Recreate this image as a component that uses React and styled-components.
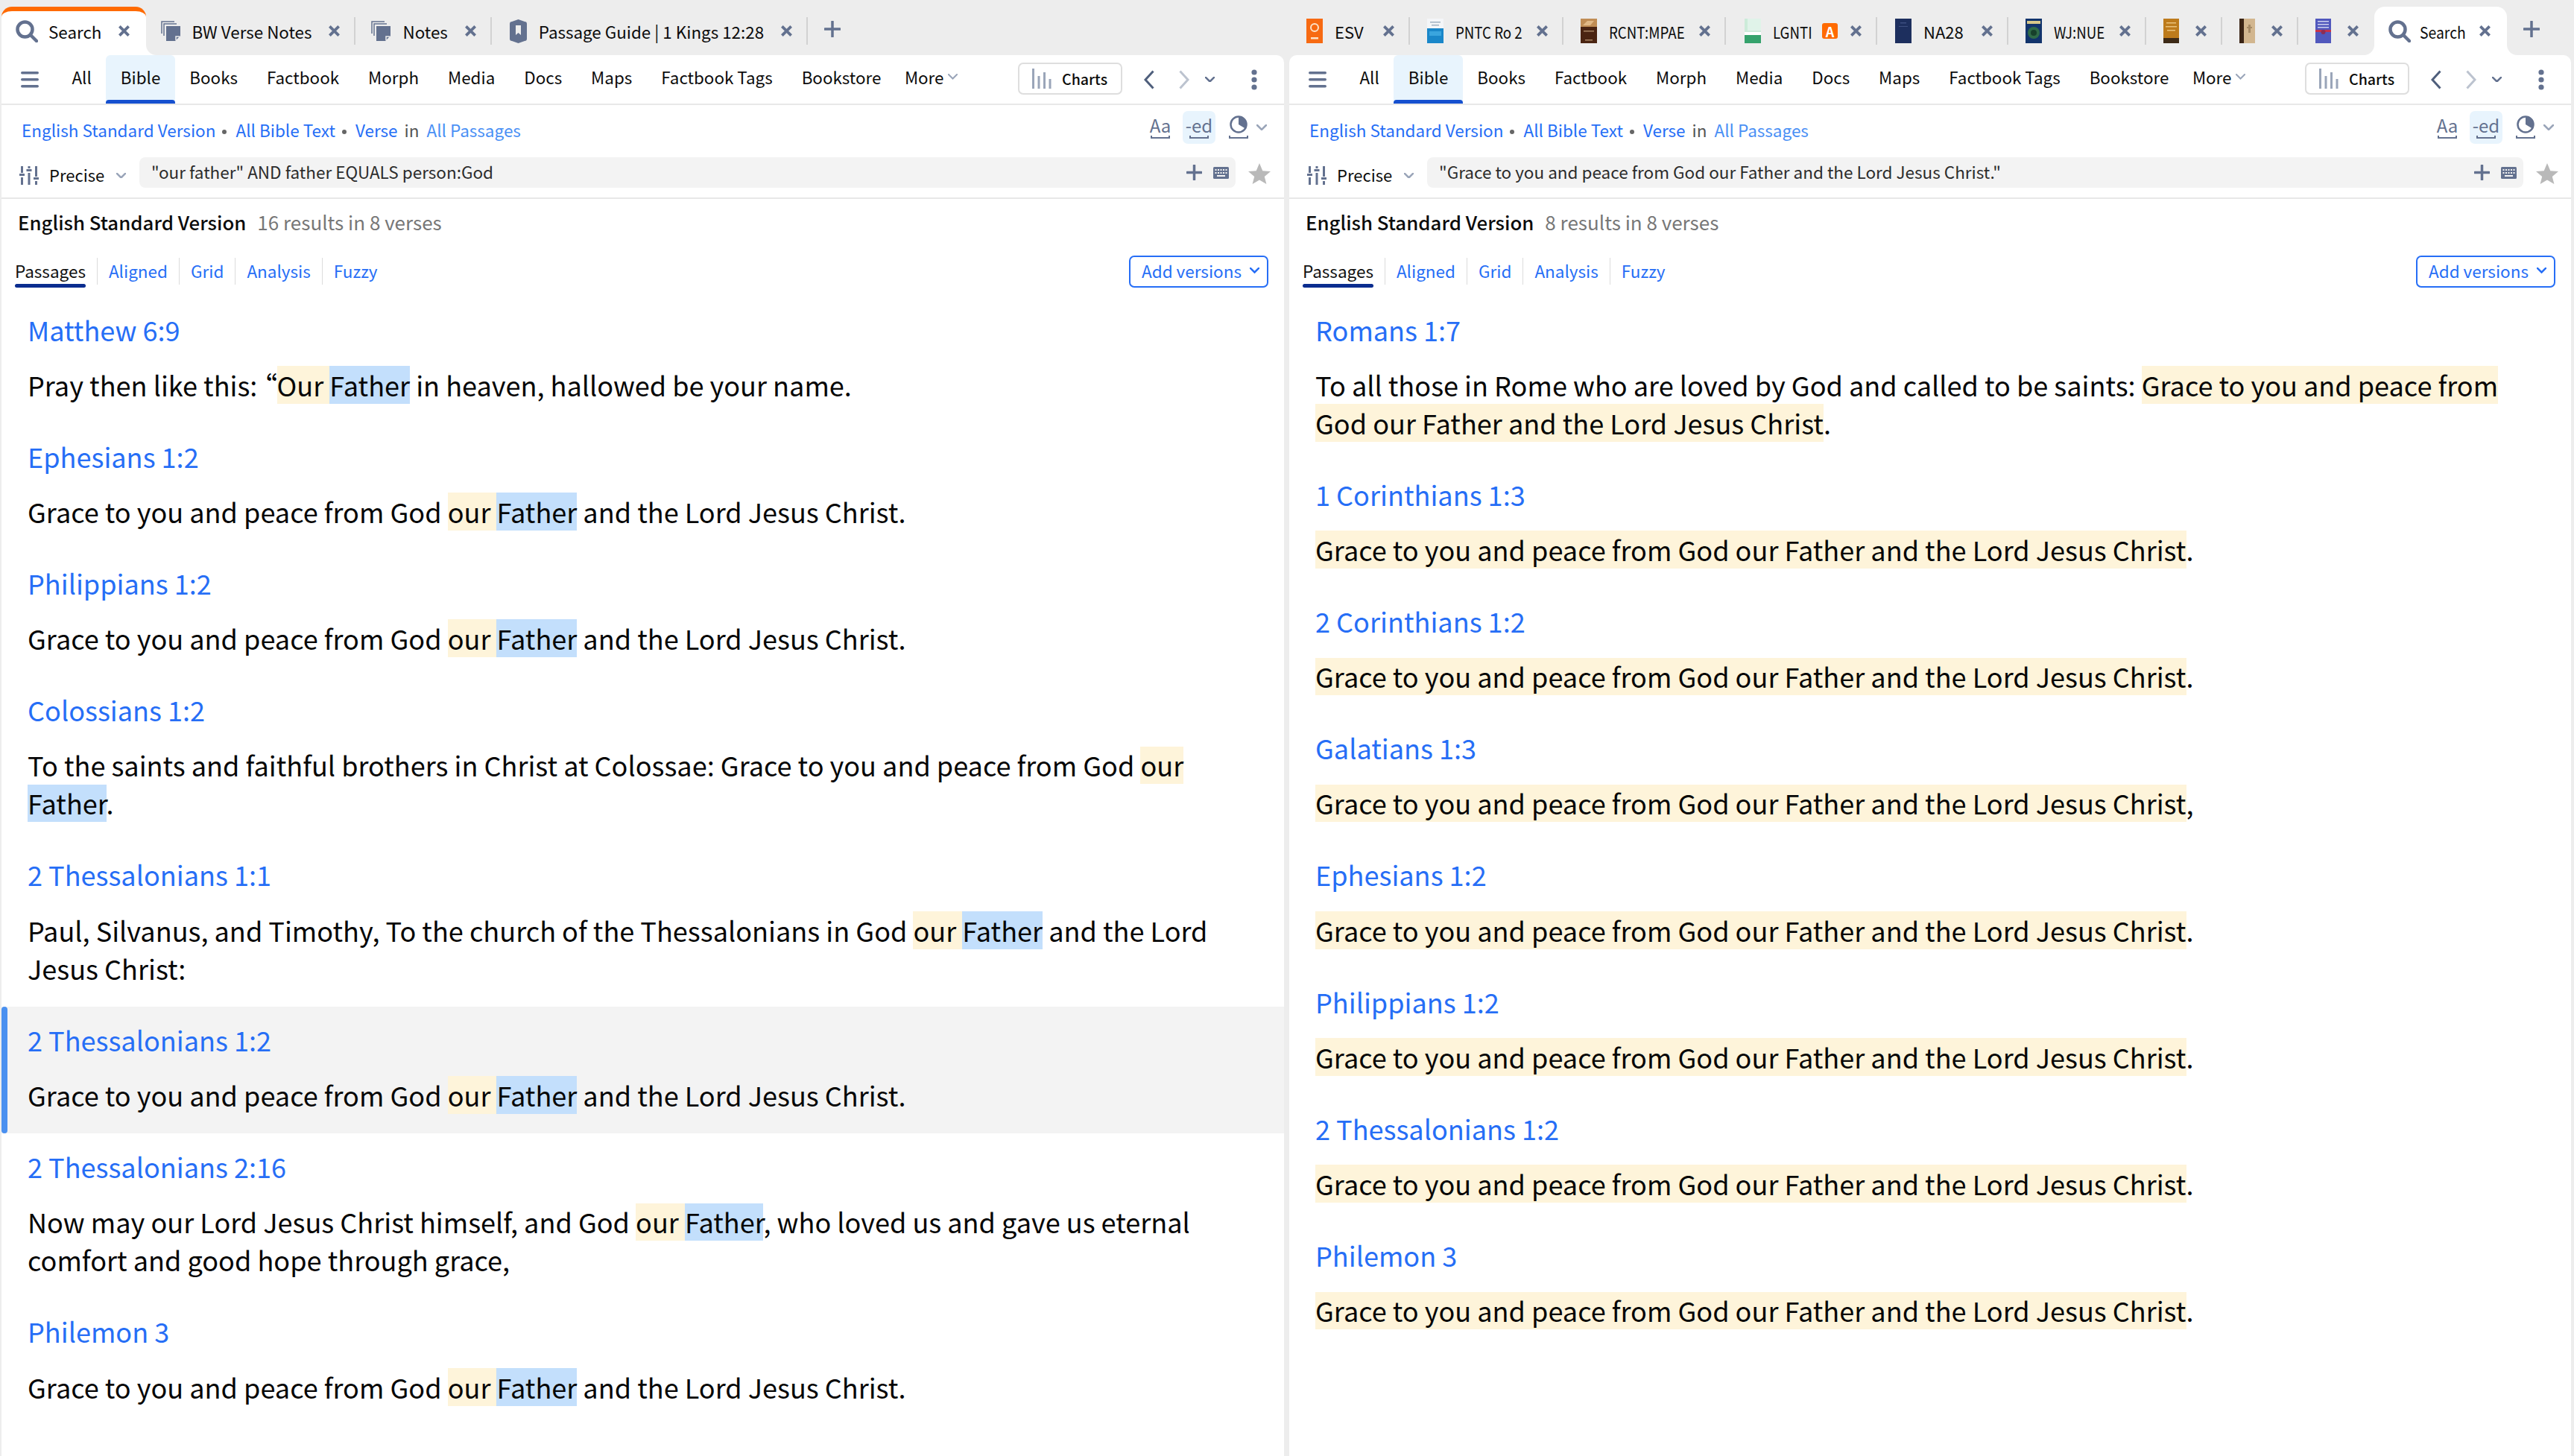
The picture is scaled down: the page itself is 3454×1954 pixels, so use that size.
import React from "react";
import styled, { createGlobalStyle } from "styled-components";

const GlobalStyle = createGlobalStyle`
  html, body {
    margin: 0;
    padding: 0;
    background: #ededed;
  }
  body {
    font-family: "Noto Sans CJK SC", "Noto Sans", sans-serif;
    font-feature-settings: "palt";
    color: #0c0c0c;
    -webkit-font-smoothing: antialiased;
  }
`;

const ICON = "#63718f";
const BLUE = "#266ef6";

const Page = styled.div`
  display: grid;
  grid-template-columns: 1721px 1720px;
  column-gap: 7px;
  padding: 0 4px 0 2px;
  width: 3454px;
  height: 1954px;
  box-sizing: border-box;
  overflow: hidden;
`;

const Pane = styled.div`
  display: flex;
  flex-direction: column;
  min-width: 0;
`;

const TabStrip = styled.div`
  display: flex;
  height: 74px;
  box-sizing: border-box;
  padding-top: 9px;
  padding-left: ${(p) => p.$inset || 0}px;
`;

const Tab = styled.div`
  display: flex;
  align-items: center;
  height: 37px;
  margin-top: 14px;
  padding: 0 18px 0 ${(p) => p.$left || 23}px;
  border-right: 2px solid ${(p) => (p.$noRule ? "transparent" : "#d2d2d2")};
  box-sizing: border-box;
  flex: none;
`;

const ActiveTab = styled.div`
  position: relative;
  display: flex;
  align-items: center;
  height: 65px;
  padding: 0 21px ${(p) => (p.$accent ? 6 : 0)}px 19px;
  background: #fff;
  border-radius: 14px 14px 0 0;
  flex: none;
  border-top: ${(p) => (p.$accent ? "6px solid #ff6a00" : "none")};
  box-sizing: border-box;

  &::after {
    content: "";
    position: absolute;
    right: -14px;
    bottom: 0;
    width: 14px;
    height: 14px;
    background: radial-gradient(circle at 100% 0, #ededed 13.5px, #fff 14.5px);
  }

  &::before {
    content: ${(p) => (p.$flareLeft ? '""' : "none")};
    position: absolute;
    left: -14px;
    bottom: 0;
    width: 14px;
    height: 14px;
    background: radial-gradient(circle at 0 0, #ededed 13.5px, #fff 14.5px);
  }
`;

const TabLabel = styled.span`
  font-size: 22.4px;
  line-height: 30px;
  margin-left: ${(p) => p.$gap || 16}px;
  white-space: nowrap;
`;

const SqueezedLabel = styled(TabLabel)`
  display: inline-block;
  font-size: 22px;
  width: ${(p) => p.$width}px;
  transform: scaleX(${(p) => p.$scale});
  transform-origin: 0 50%;
`;

const CloseBtn = styled.svg`
  width: 17px;
  height: 17px;
  margin-left: ${(p) => p.$gap || 22}px;
  flex: none;
`;

const AddTab = styled.svg`
  width: 22px;
  height: 22px;
  margin: 19px 0 0 22px;
  flex: none;
`;

const Badge = styled.span`
  display: inline-flex;
  align-items: center;
  justify-content: center;
  width: 21px;
  height: 21px;
  margin-left: 16px;
  margin-right: -6px;
  border-radius: 3px;
  background: #ff6a00;
  color: #fff;
  font-size: 18px;
  font-weight: 700;
  line-height: 1;
`;

const Panel = styled.div`
  flex: 1;
  background: #fff;
  border-radius: ${(p) => (p.$first ? "0 10px 0 0" : "10px 10px 0 0")};
  display: flex;
  flex-direction: column;
  min-height: 0;
`;

const Toolbar = styled.div`
  display: flex;
  align-items: stretch;
  height: 67px;
  box-sizing: border-box;
  border-bottom: 2px solid #e8e8e8;
  padding-left: 26px;
`;

const Hamburger = styled.svg`
  width: 24px;
  height: 22px;
  margin: 22px 25px 0 0;
  flex: none;
`;

const NavItem = styled.div`
  position: relative;
  padding: 0 19.5px;
  height: 65px;
  line-height: 58px;
  font-size: 22.4px;
  white-space: nowrap;
  flex: none;
  background: ${(p) => (p.$active ? "#e8f4fd" : "transparent")};
  border-radius: 6px 6px 0 0;

  &::after {
    content: ${(p) => (p.$active ? '""' : "none")};
    position: absolute;
    left: 0;
    right: 0;
    bottom: 0;
    height: 5px;
    background: #1650cf;
    border-radius: 4px 4px 0 0;
  }
`;

const MoreItem = styled(NavItem)`
  display: flex;
  align-items: center;
  align-self: flex-start;
  gap: 6px;
  height: 58px;
  padding: 0;
  margin-left: 12px;
`;

const ToolbarEnd = styled.div`
  display: flex;
  align-items: center;
  margin-left: auto;
  padding-right: 36px;
`;

const ChartsBtn = styled.div`
  display: flex;
  align-items: center;
  gap: 14px;
  width: 140px;
  height: 43px;
  margin-top: -2px;
  padding-left: 17px;
  box-sizing: border-box;
  border: 2px solid #dedede;
  border-radius: 7px;
  font-size: 19.6px;
  font-weight: 500;
`;

const ScopeRow = styled.div`
  display: flex;
  align-items: flex-start;
  height: 70px;
  box-sizing: border-box;
  padding: 8px 23px 0 27px;
`;

const ScopeText = styled.div`
  display: flex;
  align-items: center;
  height: 44px;
  margin-top: 3px;
  font-size: 22.5px;
  white-space: nowrap;
`;

const ScopeLink = styled.span`
  color: ${(p) => (p.$light ? "#4a90f5" : BLUE)};
`;

const Dot = styled.span`
  width: 6px;
  height: 6px;
  margin: 6px 12px 0 9px;
  border-radius: 50%;
  background: #666;
`;

const InWord = styled.span`
  margin: 0 10px 0 9px;
  color: #555;
`;

const DisplayTools = styled.div`
  display: flex;
  align-items: center;
  margin-left: auto;
`;

const GlyphToggle = styled.div`
  position: relative;
  display: flex;
  justify-content: center;
  width: 44px;
  height: 44px;
  margin-right: ${(p) => p.$gap || 0}px;
  border-radius: 7px;
  background: ${(p) => (p.$on ? "#e8f4fd" : "transparent")};
  color: ${ICON};
  font-size: 24px;
  line-height: 38px;

  &::after {
    content: "";
    position: absolute;
    left: 9px;
    right: 9px;
    bottom: 7px;
    height: 4px;
    border: 2px solid ${ICON};
    border-top: none;
    box-sizing: border-box;
  }
`;

const QueryRow = styled.div`
  display: flex;
  align-items: flex-start;
  height: 56px;
  box-sizing: border-box;
  border-bottom: 2px solid #e8e8e8;
  padding-left: 24px;
`;

const MatchMode = styled.div`
  display: flex;
  align-items: center;
  width: 161px;
  height: 41px;
  margin-top: 4px;
  font-size: 22px;
  flex: none;
`;

const ModeLabel = styled.span`
  margin: 0 16px 0 14px;
  padding-bottom: 4px;
`;

const QueryBox = styled.div`
  display: flex;
  align-items: center;
  width: ${(p) => p.$width}px;
  height: 41px;
  padding: 0 9px 0 16px;
  box-sizing: border-box;
  border-radius: 8px;
  background: #f3f3f3;
  font-size: 22.5px;
  color: #2c2c2c;
  flex: none;
`;

const QueryText = styled.span`
  flex: 1;
  padding-bottom: 4px;
  white-space: nowrap;
`;

const StarIcon = styled.svg`
  width: 30px;
  height: 28px;
  margin: 8px 0 0 17px;
  flex: none;
`;

const HeaderRow = styled.div`
  display: flex;
  align-items: center;
  height: 62px;
  box-sizing: border-box;
  padding: 0 0 2px 22px;
  white-space: nowrap;
`;

const VersionName = styled.span`
  font-size: 25.8px;
  font-weight: 500;
  margin-right: 15px;
`;

const ResultCount = styled.span`
  font-size: 26px;
  color: #777;
`;

const ViewRow = styled.div`
  display: flex;
  align-items: flex-start;
  height: 68.5px;
  box-sizing: border-box;
  padding: 14px 21px 0 18px;
`;

const ViewTabs = styled.div`
  display: flex;
  margin-top: 3px;
`;

const ViewTab = styled.div`
  position: relative;
  height: 36px;
  line-height: 34px;
  padding: 0 15px;
  font-size: 22.5px;
  color: ${(p) => (p.$active ? "#111" : BLUE)};
  border-right: ${(p) => (p.$last ? "none" : "1px solid #dcdcdc")};
  box-sizing: content-box;

  &:first-child {
    padding-left: 0;
  }
`;

const ViewUnderline = styled.span`
  position: absolute;
  left: 0;
  right: 15px;
  bottom: -4px;
  height: 5px;
  border-radius: 3px;
  background: #0b2d8f;
`;

const AddVersions = styled.div`
  display: flex;
  align-items: center;
  gap: 11px;
  height: 43px;
  width: 187px;
  margin-left: auto;
  padding: 0 0 3px 15px;
  box-sizing: border-box;
  border: 2px solid ${BLUE};
  border-radius: 7px;
  color: ${BLUE};
  font-size: 22.5px;
  white-space: nowrap;
`;

const ResultList = styled.div`
  flex: 1;
  min-height: 0;
  overflow: hidden;
`;

const Result = styled.div`
  position: relative;
  padding: 24px 35px 25.8px;
  background: ${(p) => (p.$selected ? "#f3f3f3" : "transparent")};

  &::before {
    content: ${(p) => (p.$selected ? '""' : "none")};
    position: absolute;
    left: 0;
    top: 0;
    bottom: 0;
    width: 8px;
    border-radius: 4px;
    background: #4a90f0;
  }
`;

const Reference = styled.div`
  height: 46px;
  margin-bottom: 23.2px;
  font-size: 36.1px;
  line-height: 41px;
  color: ${BLUE};
`;

const Verse = styled.div`
  font-size: 36.1px;
  line-height: 51.2px;
  color: #060606;
`;

const Hit = styled.span`
  background: linear-gradient(${(p) => p.$color}, ${(p) => p.$color}) 0 calc(50% + 0.8px) / 100% 51px no-repeat;
  -webkit-box-decoration-break: clone;
  box-decoration-break: clone;
`;

const Term = ({ children }) => <Hit $color="#fef4da">{children}</Hit>;
const Lemma = ({ children }) => <Hit $color="#c3dffc">{children}</Hit>;

// --- drawn icons ---

const SearchIcon = () => (
  <svg width="30" height="30" viewBox="0 0 30 30" style={{ flex: "none" }}>
    <circle cx="12.5" cy="12.5" r="10" fill="none" stroke={ICON} strokeWidth="4.5" />
    <path d="M20 20l8 8" stroke={ICON} strokeWidth="4.5" strokeLinecap="round" />
  </svg>
);

const CloseIcon = ({ gap }) => (
  <CloseBtn viewBox="0 0 18 18" $gap={gap}>
    <path d="M2.5 2.5l13 13M15.5 2.5l-13 13" stroke={ICON} strokeWidth="4" />
  </CloseBtn>
);

const NotesIcon = () => (
  <svg width="26" height="27" viewBox="0 0 26 27" style={{ flex: "none" }}>
    <path d="M1 17V1h17M4 20V4h17" fill="none" stroke={ICON} strokeWidth="1.5" />
    <path d="M7 7h19v13l-7 7H7z" fill={ICON} />
    <path d="M20 26v-5h5" fill="none" stroke="#ededed" strokeWidth="1.5" />
  </svg>
);

const GuideIcon = () => (
  <svg width="23" height="34" viewBox="0 0 23 34" style={{ flex: "none" }}>
    <path d="M3 4l8.5-3L20 4q3 0 3 3v20q0 3-3 3l-8.5 3L3 30q-3 0-3-3V7q0-3 3-3z" fill={ICON} />
    <path d="M8 9h7v13l-3.5-3L8 22z" fill="#ededed" />
  </svg>
);

const Book = ({ art }) => (
  <svg width="22" height="33" viewBox="0 0 22 33" style={{ flex: "none" }}>
    {art}
  </svg>
);

const esvArt = (
  <>
    <rect width="22" height="33" fill="#f76a12" />
    <circle cx="11" cy="12" r="5" fill="none" stroke="#fde2c8" strokeWidth="2" />
    <rect x="6" y="25" width="10" height="2.5" fill="#fde2c8" />
  </>
);
const pntcArt = (
  <>
    <rect width="22" height="13" fill="#f4f6f8" />
    <rect x="4" y="4" width="14" height="1.5" fill="#9fb0c0" />
    <rect x="6" y="8" width="10" height="1.5" fill="#9fb0c0" />
    <rect y="13" width="22" height="20" fill="#1a87c9" />
    <rect x="3" y="17" width="16" height="6" fill="#3aa5de" />
  </>
);
const rcntArt = (
  <>
    <rect width="22" height="33" fill="#4a2412" />
    <rect width="22" height="11" fill="#c08d55" />
    <path d="M3 9l6-6h9l-5 6z" fill="#e0b886" />
    <rect x="4" y="16" width="14" height="1.5" fill="#a88565" />
    <rect x="6" y="28" width="10" height="1.5" fill="#a88565" />
  </>
);
const lgntiArt = (
  <>
    <rect width="22" height="33" fill="#ccebd9" />
    <path d="M4 0h18v16H4z" fill="#e0f3e9" />
    <rect y="22" width="22" height="11" fill="#35a26c" />
    <rect y="18" width="22" height="4" fill="#fff" />
  </>
);
const na28Art = (
  <>
    <rect width="22" height="33" fill="#1d2f5e" />
    <rect x="7" y="5" width="8" height="1.5" fill="#3d4f80" />
    <rect x="5" y="10" width="12" height="1" fill="#3d4f80" />
  </>
);
const josephusArt = (
  <>
    <rect width="22" height="33" fill="#12346c" />
    <rect x="2" y="3" width="18" height="4" fill="#d8c88a" />
    <circle cx="11" cy="19" r="8" fill="#2f6b48" />
    <circle cx="11" cy="19" r="4" fill="#17402b" />
  </>
);
const amberArt = (
  <>
    <rect width="21" height="33" fill="#bd7b1c" />
    <rect y="26" width="21" height="7" fill="#3d2a17" />
    <rect x="4" y="5" width="13" height="1.5" fill="#eac27a" />
    <rect x="3" y="10" width="15" height="1.5" fill="#eac27a" />
    <rect x="5" y="15" width="11" height="1.5" fill="#eac27a" />
  </>
);
const tanArt = (
  <>
    <rect width="21" height="33" fill="#d2b68f" />
    <rect width="6" height="33" fill="#3a2415" />
    <rect x="12" y="8" width="3" height="11" fill="#a58a66" />
    <rect x="10" y="11" width="7" height="2" fill="#a58a66" />
  </>
);
const violetArt = (
  <>
    <rect width="21" height="33" fill="#5158bd" />
    <rect y="15" width="21" height="3" fill="#c6324a" />
    <rect x="3" y="3" width="15" height="1.5" fill="#cfd2ef" />
    <rect x="3" y="7" width="15" height="1.5" fill="#cfd2ef" />
    <rect x="3" y="11" width="15" height="1.5" fill="#cfd2ef" />
    <circle cx="10.5" cy="18" r="3" fill="#8b2d55" />
  </>
);

const PlusIcon = ({ color = ICON }) => (
  <AddTab viewBox="0 0 22 22">
    <path d="M11 1v20M1 11h20" stroke={color} strokeWidth="3.5" strokeLinecap="round" />
  </AddTab>
);

const Chevron = ({ size = 14, color = ICON, width = 2.5 }) => (
  <svg width={size} height={size * 0.6} viewBox="0 0 14 8.4" style={{ flex: "none" }}>
    <path d="M1 1l6 6 6-6" fill="none" stroke={color} strokeWidth={width * (14 / size)} strokeLinecap="round" />
  </svg>
);

const FilterIcon = () => (
  <svg width="26" height="25" viewBox="0 0 26 25" style={{ flex: "none" }}>
    <g fill={ICON}>
      <rect x="2" y="0" width="3" height="9" />
      <rect x="0" y="10" width="7" height="3" />
      <rect x="2" y="15" width="3" height="10" />
      <rect x="11.5" y="0" width="3" height="3" />
      <rect x="9.5" y="4" width="7" height="3" />
      <rect x="11.5" y="9" width="3" height="16" />
      <rect x="21" y="0" width="3" height="14" />
      <rect x="19" y="15" width="7" height="3" />
      <rect x="21" y="20" width="3" height="5" />
    </g>
  </svg>
);

const BarsIcon = () => (
  <svg width="26" height="27" viewBox="0 0 26 27" style={{ flex: "none" }}>
    <g fill="#9aa5b9">
      <rect x="0" y="0" width="3" height="27" />
      <rect x="7.5" y="10" width="3" height="17" />
      <rect x="15" y="5" width="3" height="22" />
      <rect x="22.5" y="14" width="3" height="13" />
    </g>
  </svg>
);

const Arrow = styled.svg`
  width: 14px;
  height: 26px;
  margin-left: ${(p) => p.$gap}px;
  flex: none;
`;

const DotsIcon = styled.svg`
  width: 8px;
  height: 28px;
  margin-left: 49px;
  flex: none;
`;

const ChevronSlot = styled.span`
  display: flex;
  margin-left: ${(p) => p.$gap}px;
`;

const ContrastGlyph = styled.svg`
  width: 24px;
  height: 24px;
  margin-top: 6px;
`;

const ContrastIcon = () => (
  <GlyphToggle>
    <ContrastGlyph viewBox="0 0 24 24">
      <circle cx="12" cy="12" r="10.5" fill="none" stroke={ICON} strokeWidth="2.5" />
      <path d="M12 1.5A10.5 10.5 0 0 1 21 17.5L12 12z" fill={ICON} />
    </ContrastGlyph>
  </GlyphToggle>
);

const KeyboardIcon = () => (
  <svg width="21" height="16" viewBox="0 0 21 16" style={{ flex: "none", marginLeft: 15 }}>
    <rect width="21" height="16" rx="1.5" fill={ICON} />
    <g fill="#f3f3f3">
      <rect x="2.5" y="3" width="2" height="2" />
      <rect x="6" y="3" width="2" height="2" />
      <rect x="9.5" y="3" width="2" height="2" />
      <rect x="13" y="3" width="2" height="2" />
      <rect x="16.5" y="3" width="2" height="2" />
      <rect x="2.5" y="7" width="2" height="2" />
      <rect x="6" y="7" width="2" height="2" />
      <rect x="9.5" y="7" width="2" height="2" />
      <rect x="13" y="7" width="2" height="2" />
      <rect x="16.5" y="7" width="2" height="2" />
      <rect x="5" y="11" width="11" height="2" />
    </g>
  </svg>
);

const InlinePlus = () => (
  <svg width="21" height="21" viewBox="0 0 21 21" style={{ flex: "none" }}>
    <path d="M10.5 1v19M1 10.5h19" stroke={ICON} strokeWidth="3.5" strokeLinecap="round" />
  </svg>
);

// --- data ---

const NAV = ["All", "Bible", "Books", "Factbook", "Morph", "Media", "Docs", "Maps", "Factbook Tags", "Bookstore"];
const VIEWS = ["Passages", "Aligned", "Grid", "Analysis", "Fuzzy"];

const GRACE = "Grace to you and peace from God our Father and the Lord Jesus Christ";

const leftResults = [
  { ref: "Matthew 6:9", verse: <>Pray then like this: “<Term>Our </Term><Lemma>Father</Lemma> in heaven, hallowed be your name.</> },
  { ref: "Ephesians 1:2", verse: <>Grace to you and peace from God <Term>our </Term><Lemma>Father</Lemma> and the Lord Jesus Christ.</> },
  { ref: "Philippians 1:2", verse: <>Grace to you and peace from God <Term>our </Term><Lemma>Father</Lemma> and the Lord Jesus Christ.</> },
  { ref: "Colossians 1:2", verse: <>To the saints and faithful brothers in Christ at Colossae: Grace to you and peace from God <Term>our </Term><Lemma>Father</Lemma>.</> },
  { ref: "2 Thessalonians 1:1", verse: <>Paul, Silvanus, and Timothy, To the church of the Thessalonians in God <Term>our </Term><Lemma>Father</Lemma> and the Lord Jesus Christ:</> },
  { ref: "2 Thessalonians 1:2", selected: true, verse: <>Grace to you and peace from God <Term>our </Term><Lemma>Father</Lemma> and the Lord Jesus Christ.</> },
  { ref: "2 Thessalonians 2:16", verse: <>Now may our Lord Jesus Christ himself, and God <Term>our </Term><Lemma>Father</Lemma>, who loved us and gave us eternal comfort and good hope through grace,</> },
  { ref: "Philemon 3", verse: <>Grace to you and peace from God <Term>our </Term><Lemma>Father</Lemma> and the Lord Jesus Christ.</> },
];

const rightResults = [
  { ref: "Romans 1:7", verse: <>To all those in Rome who are loved by God and called to be saints: <Term>{GRACE}</Term>.</> },
  { ref: "1 Corinthians 1:3", verse: <><Term>{GRACE}</Term>.</> },
  { ref: "2 Corinthians 1:2", verse: <><Term>{GRACE}</Term>.</> },
  { ref: "Galatians 1:3", verse: <><Term>{GRACE}</Term>,</> },
  { ref: "Ephesians 1:2", verse: <><Term>{GRACE}</Term>.</> },
  { ref: "Philippians 1:2", verse: <><Term>{GRACE}</Term>.</> },
  { ref: "2 Thessalonians 1:2", verse: <><Term>{GRACE}</Term>.</> },
  { ref: "Philemon 3", verse: <><Term>{GRACE}</Term>.</> },
];

function SearchPanel({ first, query, queryWidth, count, results }) {
  return (
    <Panel $first={first}>
      <Toolbar>
        <Hamburger viewBox="0 0 24 22">
          <g fill={ICON}>
            <rect y="0" width="24" height="3.5" rx="1.7" />
            <rect y="9" width="24" height="3.5" rx="1.7" />
            <rect y="18" width="24" height="3.5" rx="1.7" />
          </g>
        </Hamburger>
        {NAV.map((n) => (
          <NavItem key={n} $active={n === "Bible"}>{n}</NavItem>
        ))}
        <MoreItem>
          More <Chevron size={13} color="#9aa5b9" width={2} />
        </MoreItem>
        <ToolbarEnd>
          <ChartsBtn>
            <BarsIcon />
            Charts
          </ChartsBtn>
          <Arrow viewBox="0 0 14 26" $gap={29}>
            <path d="M12.5 1.5L2 13l10.5 11.5" fill="none" stroke="#4f5f7c" strokeWidth="3" />
          </Arrow>
          <Arrow viewBox="0 0 14 26" $gap={33}>
            <path d="M1.5 1.5L12 13 1.5 24.5" fill="none" stroke="#bcc3cf" strokeWidth="3" />
          </Arrow>
          <ChevronSlot $gap={21}>
            <Chevron size={13} />
          </ChevronSlot>
          <DotsIcon viewBox="0 0 8 28">
            <g fill={ICON}>
              <circle cx="4" cy="4" r="3.6" />
              <circle cx="4" cy="14" r="3.6" />
              <circle cx="4" cy="24" r="3.6" />
            </g>
          </DotsIcon>
        </ToolbarEnd>
      </Toolbar>

      <ScopeRow>
        <ScopeText>
          <ScopeLink>English Standard Version</ScopeLink>
          <Dot />
          <ScopeLink>All Bible Text</ScopeLink>
          <Dot />
          <ScopeLink>Verse</ScopeLink>
          <InWord>in</InWord>
          <ScopeLink $light>All Passages</ScopeLink>
        </ScopeText>
        <DisplayTools>
          <GlyphToggle $gap={8}>Aa</GlyphToggle>
          <GlyphToggle $on $gap={9}>-ed</GlyphToggle>
          <ContrastIcon />
          <ChevronSlot $gap={2}>
            <Chevron size={14} color="#9aa5b9" />
          </ChevronSlot>
        </DisplayTools>
      </ScopeRow>

      <QueryRow>
        <MatchMode>
          <FilterIcon />
          <ModeLabel>Precise</ModeLabel>
          <Chevron size={13} color="#9aa5b9" />
        </MatchMode>
        <QueryBox $width={queryWidth}>
          <QueryText>{query}</QueryText>
          <InlinePlus />
          <KeyboardIcon />
        </QueryBox>
        <StarIcon viewBox="0 0 30 28">
          <path d="M15 0l4.3 10.2 10.7.8-8.2 7 2.6 10L15 22.6 5.6 28l2.6-10L0 11l10.7-.8z" fill="#b9b9b9" />
        </StarIcon>
      </QueryRow>

      <HeaderRow>
        <VersionName>English Standard Version</VersionName>
        <ResultCount>{count}</ResultCount>
      </HeaderRow>

      <ViewRow>
        <ViewTabs>
          {VIEWS.map((v, i) => (
            <ViewTab key={v} $active={i === 0} $last={i === VIEWS.length - 1}>
              {v}
              {i === 0 && <ViewUnderline />}
            </ViewTab>
          ))}
        </ViewTabs>
        <AddVersions>
          Add versions
          <Chevron size={13} color={BLUE} />
        </AddVersions>
      </ViewRow>

      <ResultList>
        {results.map((r) => (
          <Result key={r.ref} $selected={r.selected}>
            <Reference>{r.ref}</Reference>
            <Verse>{r.verse}</Verse>
          </Result>
        ))}
      </ResultList>
    </Panel>
  );
}

export default function App() {
  return (
    <>
      <GlobalStyle />
      <Page>
        <Pane>
          <TabStrip>
            <ActiveTab $accent>
              <SearchIcon />
              <TabLabel $gap={14}>Search</TabLabel>
              <CloseIcon gap={22} />
            </ActiveTab>
            <Tab $left={20}>
              <NotesIcon />
              <TabLabel $gap={15}>BW Verse Notes</TabLabel>
              <CloseIcon />
            </Tab>
            <Tab $left={21}>
              <NotesIcon />
              <TabLabel>Notes</TabLabel>
              <CloseIcon />
            </Tab>
            <Tab $left={24}>
              <GuideIcon />
              <TabLabel>Passage Guide | 1 Kings 12:28</TabLabel>
              <CloseIcon />
            </Tab>
            <PlusIcon />
          </TabStrip>
          <SearchPanel
            first
            query={'"our father" AND father EQUALS person:God'}
            queryWidth={1471}
            count="16 results in 8 verses"
            results={leftResults}
          />
        </Pane>

        <Pane>
          <TabStrip $inset={2}>
            <Tab $left={21}>
              <Book art={esvArt} />
              <SqueezedLabel $width={42} $scale={1}>ESV</SqueezedLabel>
              <CloseIcon />
            </Tab>
            <Tab>
              <Book art={pntcArt} />
              <SqueezedLabel $width={86} $scale={0.85}>PNTC Ro 2</SqueezedLabel>
              <CloseIcon />
            </Tab>
            <Tab>
              <Book art={rcntArt} />
              <SqueezedLabel $width={98} $scale={0.85}>RCNT:MPAE</SqueezedLabel>
              <CloseIcon />
            </Tab>
            <Tab $left={25}>
              <Book art={lgntiArt} />
              <SqueezedLabel $width={50} $scale={0.85}>LGNTI</SqueezedLabel>
              <Badge>A</Badge>
              <CloseIcon />
            </Tab>
            <Tab $left={24}>
              <Book art={na28Art} />
              <SqueezedLabel $width={55} $scale={1}>NA28</SqueezedLabel>
              <CloseIcon />
            </Tab>
            <Tab>
              <Book art={josephusArt} />
              <SqueezedLabel $width={65} $scale={0.85}>WJ:NUE</SqueezedLabel>
              <CloseIcon />
            </Tab>
            <Tab>
              <Book art={amberArt} />
              <CloseIcon gap={20} />
            </Tab>
            <Tab>
              <Book art={tanArt} />
              <CloseIcon gap={20} />
            </Tab>
            <Tab $noRule>
              <Book art={violetArt} />
              <CloseIcon gap={20} />
            </Tab>
            <ActiveTab $flareLeft>
              <SearchIcon />
              <SqueezedLabel $gap={12} $width={58} $scale={0.88}>Search</SqueezedLabel>
              <CloseIcon gap={21} />
            </ActiveTab>
            <PlusIcon />
          </TabStrip>
          <SearchPanel
            query={'"Grace to you and peace from God our Father and the Lord Jesus Christ."'}
            queryWidth={1471}
            count="8 results in 8 verses"
            results={rightResults}
          />
        </Pane>
      </Page>
    </>
  );
}
